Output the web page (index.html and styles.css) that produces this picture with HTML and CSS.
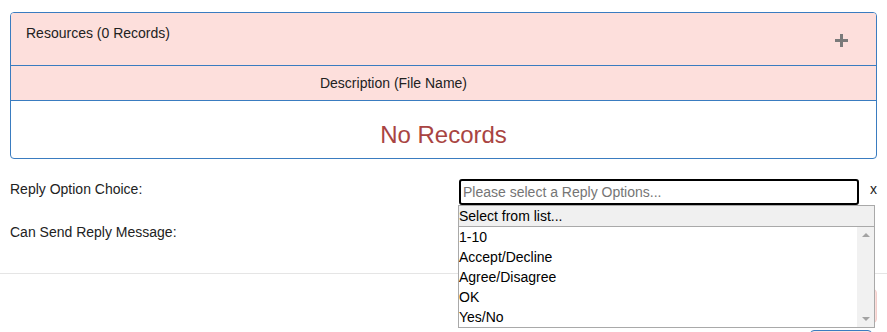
FILE: index.html
```html
<!DOCTYPE html>
<html lang="en">
<head>
    <meta charset="UTF-8">
    <meta name="viewport" content="width=device-width, initial-scale=1.0">
    <title>Reply Options</title>
    <link rel="stylesheet" href="styles.css">
</head>
<body>
    <div class="modal-body">
        <div class="panel">
            <div class="panel-heading">
                <span>Resources (0 Records)</span>
                <svg class="add-icon" width="13" height="13" viewBox="0 0 13 13">
                    <rect x="5" y="0" width="3" height="13" fill="#7a7a7a"/>
                    <rect x="0" y="5" width="13" height="3" fill="#7a7a7a"/>
                </svg>
            </div>
            <table class="records">
                <thead>
                    <tr>
                        <th>Description (File Name)</th>
                        <th class="actions-col"></th>
                    </tr>
                </thead>
                <tbody>
                    <tr>
                        <td colspan="2" class="no-records">No Records</td>
                    </tr>
                </tbody>
            </table>
        </div>

        <div class="form-row first">
            <label class="form-label">Reply Option Choice:</label>
            <div class="combo">
                <input type="text" class="combo-input" placeholder="Please select a Reply Options...">
                <div class="combo-menu">
                    <div class="combo-title">Select from list...</div>
                    <div class="combo-list">
                        <ul>
                            <li>1-10</li>
                            <li>Accept/Decline</li>
                            <li>Agree/Disagree</li>
                            <li>OK</li>
                            <li>Yes/No</li>
                        </ul>
                        <div class="scrollbar">
                            <span class="arrow up"></span>
                            <span class="arrow down"></span>
                        </div>
                    </div>
                </div>
            </div>
            <span class="clear">x</span>
        </div>

        <div class="form-row">
            <label class="form-label">Can Send Reply Message:</label>
        </div>
    </div>

    <div class="modal-footer">
        <button class="btn btn-save" aria-label="Save"></button>
        <button class="btn btn-cancel" aria-label="Cancel"></button>
    </div>
</body>
</html>
```

FILE: styles.css
```css
body {
    margin: 0;
    font-family: 'Liberation Sans', Arial, sans-serif;
    font-size: 14px;
    color: #222;
    background-color: #FFFFFF;
}

.modal-body {
    padding: 12px 10px 25px;
}

.panel {
    border: 1px solid #3a7cc0;
    border-radius: 4px;
    overflow: hidden;
}

.panel-heading {
    display: flex;
    justify-content: space-between;
    align-items: flex-start;
    height: 53px;
    box-sizing: border-box;
    padding: 10px 28px 0 15px;
    line-height: 20px;
    background-color: #fddfdc;
    border-bottom: 1px solid #3a7cc0;
}

.add-icon {
    margin-top: 11px;
}

.records {
    width: 100%;
    border-collapse: collapse;
}

.records th {
    height: 34px;
    padding: 0;
    font-weight: normal;
    text-align: center;
    background-color: #fddfdc;
    border-bottom: 1px solid #3a7cc0;
}

.records .actions-col {
    width: 100px;
}

.no-records {
    padding: 20px 0 9px;
    line-height: 28px;
    text-align: center;
    font-size: 24px;
    color: #a94442;
}

.form-row {
    display: flex;
    align-items: flex-start;
    height: 26px;
    margin-top: 17px;
    line-height: 16px;
}

.form-row.first {
    margin-top: 20px;
}

.form-label {
    width: 449px;
    padding-top: 2px;
}

.combo {
    position: relative;
    width: 400px;
    height: 26px;
}

.combo-input {
    width: 100%;
    height: 26px;
    box-sizing: border-box;
    margin: 0;
    padding: 0 2px;
    border: 2px solid #000;
    border-radius: 3px;
    outline: none;
    font-family: inherit;
    font-size: 14px;
    color: #222;
}

.combo-input::placeholder {
    color: #757575;
}

.clear {
    margin-left: 11px;
    padding-top: 2px;
    color: #222;
}

.combo-menu {
    position: absolute;
    top: 26px;
    left: -1px;
    width: 417px;
    box-sizing: border-box;
    border: 1px solid #a9a9a9;
    background-color: #FFFFFF;
    z-index: 10;
}

.combo-title {
    height: 20px;
    line-height: 20px;
    background-color: #f0f0f0;
    border-bottom: 1px solid #a9a9a9;
    color: #000;
}

.combo-list {
    display: flex;
    height: 100px;
}

.combo-list ul {
    flex: 1;
    list-style: none;
    margin: 0;
    padding: 0;
}

.combo-list li {
    height: 20px;
    line-height: 20px;
    color: #000;
}

.scrollbar {
    display: flex;
    flex-direction: column;
    justify-content: space-between;
    align-items: center;
    width: 17px;
    padding: 6px 0;
    box-sizing: border-box;
    background-color: #f1f1f1;
}

.arrow {
    width: 0;
    height: 0;
    border-left: 4px solid transparent;
    border-right: 4px solid transparent;
}

.arrow.up {
    border-bottom: 4px solid #a3a3a3;
}

.arrow.down {
    border-top: 4px solid #a3a3a3;
}

.modal-footer {
    display: flex;
    flex-direction: column;
    align-items: flex-end;
    gap: 7px;
    padding: 15px 10px;
    border-top: 1px solid #e5e5e5;
}

.btn {
    height: 34px;
    padding: 0 12px;
    border-radius: 4px;
    background-color: #fddfdc;
}

.btn-save {
    width: 80px;
    border: 1px solid #f3cfcc;
}

.btn-cancel {
    width: 62px;
    margin-right: 5px;
    border: 1px solid #3a7cc0;
}
```
